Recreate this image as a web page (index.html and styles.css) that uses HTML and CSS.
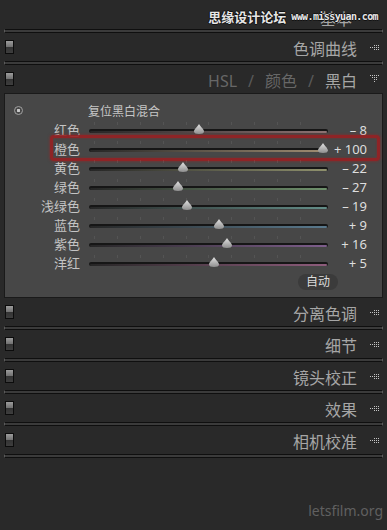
FILE: index.html
```html
<!DOCTYPE html>
<html lang="zh-CN">
<head>
  <meta charset="UTF-8">
  <meta name="viewport" content="width=device-width, initial-scale=1.0">
  <title>黑白混合</title>
  <link rel="stylesheet" href="styles.css">
</head>
<body>
  <svg class="defs" width="0" height="0">
    <defs>
      <pattern id="dots" width="2" height="2" patternUnits="userSpaceOnUse">
        <rect x="0" y="0" width="1" height="1" fill="#c4c4c4" />
      </pattern>
      <linearGradient id="knob" x1="0" y1="0" x2="0" y2="1">
        <stop offset="0" stop-color="#e2e2e2" />
        <stop offset="1" stop-color="#8e8e8e" />
      </linearGradient>
    </defs>
  </svg>

  <div class="page">
    <div class="hdr first">
      <span class="title">基本</span>
    </div>
    <div class="divider"></div>

    <div class="hdr">
      <span class="sw"></span>
      <span class="title">色调曲线</span>
      <svg class="tri" width="10" height="9" viewBox="0 0 10 9"><polygon points="0,4.5 10,0 10,9" fill="url(#dots)" /></svg>
    </div>
    <div class="divider"></div>

    <div class="hdr">
      <span class="sw"></span>
      <span class="title tabs"><span class="dim">HSL</span><span class="sep">/</span><span class="dim">颜色</span><span class="sep">/</span><span>黑白</span></span>
      <svg class="tri" width="10" height="9" viewBox="0 0 10 9"><polygon points="0,0 10,0 5,8" fill="url(#dots)" /></svg>
    </div>

    <div class="panel">
      <div class="reset">
        <span class="target"></span>
        <span class="reset-label">复位黑白混合</span>
      </div>

      <div class="row">
        <span class="label">红色</span>
        <div class="track red"><svg class="thumb" style="--p:0.46" width="11" height="10" viewBox="0 0 11 10"><path d="M5.5 0 C7 3 10.5 5 10.5 7.5 C10.5 9.2 8.5 10 5.5 10 C2.5 10 0.5 9.2 0.5 7.5 C0.5 5 4 3 5.5 0 Z" fill="url(#knob)" /></svg></div>
        <span class="value">– 8</span>
      </div>
      <div class="row hl">
        <span class="label">橙色</span>
        <div class="track orange"><svg class="thumb" style="--p:1" width="11" height="10" viewBox="0 0 11 10"><path d="M5.5 0 C7 3 10.5 5 10.5 7.5 C10.5 9.2 8.5 10 5.5 10 C2.5 10 0.5 9.2 0.5 7.5 C0.5 5 4 3 5.5 0 Z" fill="url(#knob)" /></svg></div>
        <span class="value">+ 100</span>
      </div>
      <div class="row">
        <span class="label">黄色</span>
        <div class="track yellow"><svg class="thumb" style="--p:0.39" width="11" height="10" viewBox="0 0 11 10"><path d="M5.5 0 C7 3 10.5 5 10.5 7.5 C10.5 9.2 8.5 10 5.5 10 C2.5 10 0.5 9.2 0.5 7.5 C0.5 5 4 3 5.5 0 Z" fill="url(#knob)" /></svg></div>
        <span class="value">– 22</span>
      </div>
      <div class="row">
        <span class="label">绿色</span>
        <div class="track green"><svg class="thumb" style="--p:0.365" width="11" height="10" viewBox="0 0 11 10"><path d="M5.5 0 C7 3 10.5 5 10.5 7.5 C10.5 9.2 8.5 10 5.5 10 C2.5 10 0.5 9.2 0.5 7.5 C0.5 5 4 3 5.5 0 Z" fill="url(#knob)" /></svg></div>
        <span class="value">– 27</span>
      </div>
      <div class="row">
        <span class="label">浅绿色</span>
        <div class="track aqua"><svg class="thumb" style="--p:0.405" width="11" height="10" viewBox="0 0 11 10"><path d="M5.5 0 C7 3 10.5 5 10.5 7.5 C10.5 9.2 8.5 10 5.5 10 C2.5 10 0.5 9.2 0.5 7.5 C0.5 5 4 3 5.5 0 Z" fill="url(#knob)" /></svg></div>
        <span class="value">– 19</span>
      </div>
      <div class="row">
        <span class="label">蓝色</span>
        <div class="track blue"><svg class="thumb" style="--p:0.545" width="11" height="10" viewBox="0 0 11 10"><path d="M5.5 0 C7 3 10.5 5 10.5 7.5 C10.5 9.2 8.5 10 5.5 10 C2.5 10 0.5 9.2 0.5 7.5 C0.5 5 4 3 5.5 0 Z" fill="url(#knob)" /></svg></div>
        <span class="value">+ 9</span>
      </div>
      <div class="row">
        <span class="label">紫色</span>
        <div class="track purple"><svg class="thumb" style="--p:0.58" width="11" height="10" viewBox="0 0 11 10"><path d="M5.5 0 C7 3 10.5 5 10.5 7.5 C10.5 9.2 8.5 10 5.5 10 C2.5 10 0.5 9.2 0.5 7.5 C0.5 5 4 3 5.5 0 Z" fill="url(#knob)" /></svg></div>
        <span class="value">+ 16</span>
      </div>
      <div class="row">
        <span class="label">洋红</span>
        <div class="track magenta"><svg class="thumb" style="--p:0.525" width="11" height="10" viewBox="0 0 11 10"><path d="M5.5 0 C7 3 10.5 5 10.5 7.5 C10.5 9.2 8.5 10 5.5 10 C2.5 10 0.5 9.2 0.5 7.5 C0.5 5 4 3 5.5 0 Z" fill="url(#knob)" /></svg></div>
        <span class="value">+ 5</span>
      </div>

      <div class="auto-row">
        <span class="auto">自动</span>
      </div>
    </div>

    <div class="hdr">
      <span class="sw"></span>
      <span class="title">分离色调</span>
      <svg class="tri" width="10" height="9" viewBox="0 0 10 9"><polygon points="0,4.5 10,0 10,9" fill="url(#dots)" /></svg>
    </div>
    <div class="divider"></div>

    <div class="hdr">
      <span class="sw"></span>
      <span class="title">细节</span>
      <svg class="tri" width="10" height="9" viewBox="0 0 10 9"><polygon points="0,4.5 10,0 10,9" fill="url(#dots)" /></svg>
    </div>
    <div class="divider"></div>

    <div class="hdr">
      <span class="sw"></span>
      <span class="title">镜头校正</span>
      <svg class="tri" width="10" height="9" viewBox="0 0 10 9"><polygon points="0,4.5 10,0 10,9" fill="url(#dots)" /></svg>
    </div>
    <div class="divider"></div>

    <div class="hdr">
      <span class="sw"></span>
      <span class="title">效果</span>
      <svg class="tri" width="10" height="9" viewBox="0 0 10 9"><polygon points="0,4.5 10,0 10,9" fill="url(#dots)" /></svg>
    </div>
    <div class="divider"></div>

    <div class="hdr">
      <span class="sw"></span>
      <span class="title">相机校准</span>
      <svg class="tri" width="10" height="9" viewBox="0 0 10 9"><polygon points="0,4.5 10,0 10,9" fill="url(#dots)" /></svg>
    </div>
    <div class="divider"></div>

    <!-- watermarks -->
    <div class="mark-top"><span class="mark-cn">思缘设计论坛</span><span class="mark-url">www.missyuan.com</span></div>
    <div class="mark-bottom">letsfilm.org</div>
  </div>
</body>
</html>
```

FILE: styles.css
```css
body {
  margin: 0;
  padding: 0;
  background-color: #292929;
  font-family: "Noto Sans", "Noto Sans CJK SC", sans-serif;
  color: #a8a8a8;
}
.defs {
  position: absolute;
}
.page {
  position: relative;
  height: 530px;
  overflow: hidden;
}

/* section headers */
.hdr {
  display: flex;
  align-items: center;
  height: 28px;
  padding: 0 7px 0 5px;
}
.hdr.first {
  height: 29px;
  padding-right: 35px;
}
.hdr.first .title {
  margin-top: 8px;
}
.title {
  margin-left: auto;
  margin-top: 3px;
  font-size: 16px;
  line-height: 1;
  color: #a6a6a6;
}
.tri {
  margin-left: 13px;
  shape-rendering: crispEdges;
}
.sw {
  width: 7px;
  height: 12px;
  border: 1px solid #0c0c0c;
  background: linear-gradient(#9c9c9c, #707070 50%, #333 50%, #3e3e3e);
}
.tabs .dim {
  color: #676767;
}
.tabs .sep {
  color: #5a5a5a;
  margin: 0 11px;
}
.divider {
  height: 2px;
  margin: 0 4px;
  border: 1px solid #0f0f0f;
  border-left-color: #5a5a5a;
  border-right-color: #5a5a5a;
  background-color: #3b3b3b;
}

/* black & white mix panel */
.panel {
  margin: 0 4px;
  border: 1px solid #1a1a1a;
  background-color: #474747;
  padding: 7px 0;
}
.reset {
  display: flex;
  align-items: center;
  height: 19px;
  padding-left: 9px;
}
.target {
  box-sizing: border-box;
  width: 9px;
  height: 9px;
  border: 1px solid #a0a0a0;
  border-radius: 50%;
  background: radial-gradient(circle, #c8c8c8 0 1.4px, transparent 1.6px);
}
.reset-label {
  margin-left: 65px;
  font-size: 12px;
  color: #c6c6c6;
}
.row {
  position: relative;
  display: flex;
  align-items: center;
  height: 19px;
}
.row.hl::after {
  content: "";
  position: absolute;
  top: -4px;
  bottom: -3px;
  left: 45px;
  right: 2px;
  border: 3px solid rgba(150, 32, 34, 0.9);
  border-radius: 4px;
  box-shadow: 0 0 3px rgba(170, 30, 30, 0.7), inset 0 0 2px rgba(170, 30, 30, 0.6);
}
.label {
  width: 75px;
  padding-right: 1px;
  text-align: right;
  font-size: 13px;
  color: #c4c4c4;
}
.track {
  position: relative;
  width: 239px;
  height: 4px;
  margin-left: 8px;
  margin-top: 3px;
  border-radius: 2px;
  background-color: #161616;
}
.track::before {
  content: "";
  position: absolute;
  left: 1px;
  right: 1px;
  bottom: 0;
  height: 2px;
  border-radius: 1px;
  background: linear-gradient(90deg, #262626, var(--c));
}
.track::after {
  content: "";
  position: absolute;
  left: 5px;
  right: 5px;
  top: -7px;
  height: 3px;
  background: repeating-linear-gradient(90deg, rgba(255, 255, 255, 0.07) 0 1px, transparent 1px 22.9px);
}
.red { --c: #8e7474; }
.orange { --c: #a08d72; }
.yellow { --c: #8f916d; }
.green { --c: #6f916c; }
.aqua { --c: #638d88; }
.blue { --c: #5a7a8e; }
.purple { --c: #7e5e8c; }
.magenta { --c: #8e5c7c; }
.thumb {
  position: absolute;
  left: calc(5px + var(--p) * (100% - 10px));
  bottom: -1px;
  transform: translateX(-50%);
  z-index: 1;
}
.value {
  width: 39px;
  text-align: right;
  font-size: 13px;
  color: #dedede;
}
.auto-row {
  display: flex;
  justify-content: flex-end;
  margin-top: 2px;
  padding-right: 44px;
}
.auto {
  width: 40px;
  height: 16px;
  line-height: 16px;
  border-radius: 8px;
  background-color: #3b3b3b;
  text-align: center;
  font-size: 12px;
  color: #dcdcdc;
}

/* watermarks laid over the screenshot */
.mark-top {
  position: absolute;
  top: 7px;
  right: 9px;
  display: flex;
  align-items: center;
  gap: 5px;
  color: #e6e6e6;
  text-shadow: 1px 0 0 #111, -1px 0 0 #111, 0 1px 0 #111, 0 -1px 0 #111;
}
.mark-cn {
  font-size: 13px;
  font-weight: bold;
}
.mark-url {
  font-family: "DejaVu Sans Mono", monospace;
  font-size: 10px;
  font-weight: bold;
  letter-spacing: -0.6px;
}
.mark-bottom {
  position: absolute;
  right: 4px;
  bottom: 10px;
  font-size: 14px;
  color: #606060;
}
```
